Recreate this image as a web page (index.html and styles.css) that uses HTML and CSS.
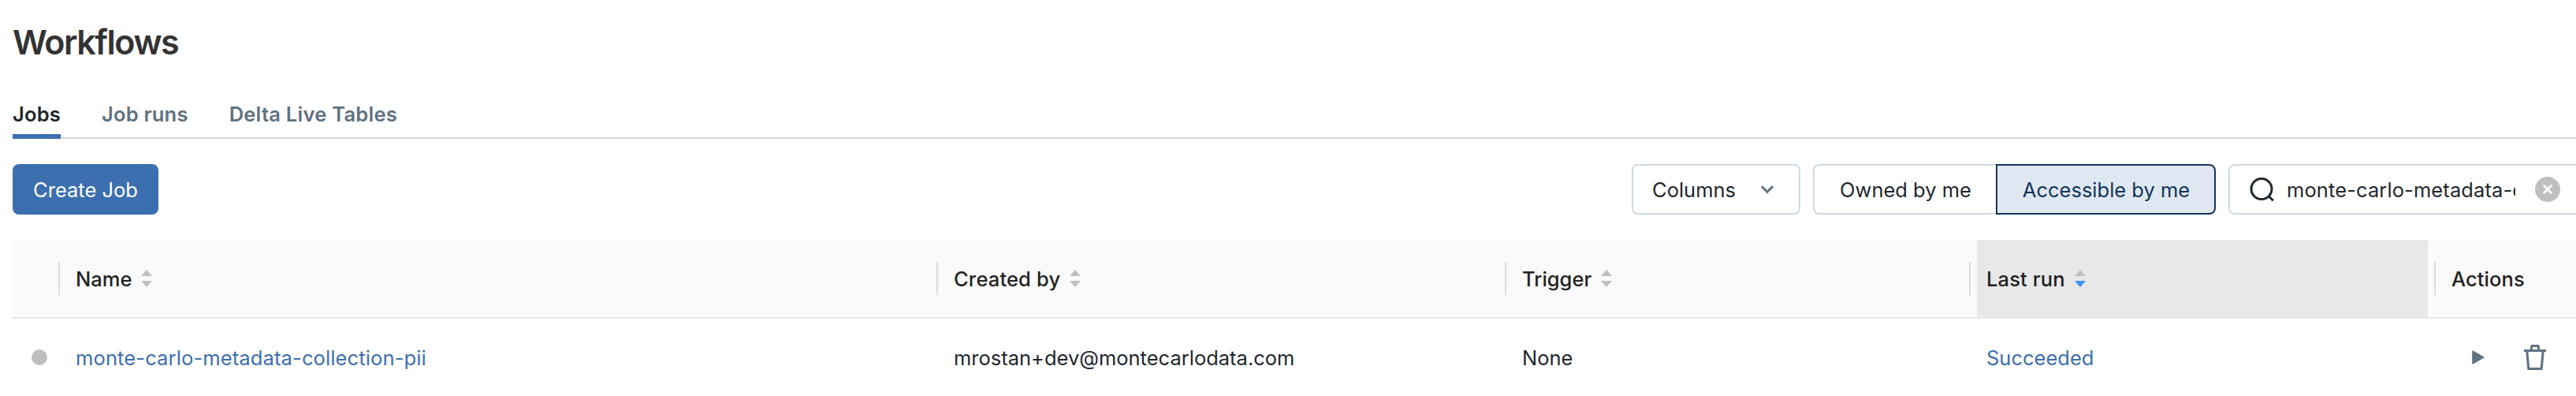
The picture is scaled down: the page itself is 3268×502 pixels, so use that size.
FILE: index.html
```html
<!DOCTYPE html>
<html lang="en">
<head>
<meta charset="utf-8">
<title>Workflows</title>
<link rel="stylesheet" href="styles.css">
</head>
<body>
<main class="page">
  <h1 class="title">Workflows</h1>
  <nav class="tabs">
    <a class="tab tab-active">Jobs</a>
    <a class="tab tab-runs">Job runs</a>
    <a class="tab tab-delta">Delta Live Tables</a>
  </nav>
  <div class="toolbar">
    <button class="btn create">Create Job</button>
    <div class="filters">
      <button class="btn columns">Columns
        <svg class="chevron" width="16" height="11" viewBox="0 0 16 11"><path d="M1.8 2l6.2 6.4L14.2 2"/></svg>
      </button>
      <div class="segment">
        <button class="btn owned">Owned by me</button>
        <button class="btn accessible">Accessible by me</button>
      </div>
      <div class="search">
        <svg class="lens" width="32" height="32" viewBox="0 0 32 32"><circle cx="15" cy="15.5" r="13"/><path d="M24.2 24.7l5.6 5.6"/></svg>
        <div class="query">monte-carlo-metadata-collection-pii</div>
        <svg class="clear" width="32" height="32" viewBox="0 0 32 32"><circle cx="16" cy="16" r="16"/><path d="M10.8 10.8l10.4 10.4M21.2 10.8l-10.4 10.4"/></svg>
      </div>
    </div>
  </div>
  <div class="table">
    <div class="row head">
      <div class="cell divided"></div>
      <div class="cell divided">Name<svg class="sort" width="14" height="22" viewBox="0 0 14 22"><path d="M7 0l7 8H0z"/><path d="M0 14h14l-7 8z"/></svg></div>
      <div class="cell divided"><span class="creator-label">Created by</span><svg class="sort" width="14" height="22" viewBox="0 0 14 22"><path d="M7 0l7 8H0z"/><path d="M0 14h14l-7 8z"/></svg></div>
      <div class="cell divided before-sorted">Trigger<svg class="sort" width="14" height="22" viewBox="0 0 14 22"><path d="M7 0l7 8H0z"/><path d="M0 14h14l-7 8z"/></svg></div>
      <div class="cell sorted"><span class="run-label">Last run</span><svg class="sort" width="14" height="22" viewBox="0 0 14 22"><path d="M7 0l7 8H0z"/><path class="on" d="M0 14h14l-7 8z"/></svg></div>
      <div class="cell actions-head">Actions</div>
    </div>
    <div class="row body">
      <div class="cell status"><i class="dot"></i></div>
      <div class="cell"><a class="link job">monte-carlo-metadata-collection-pii</a></div>
      <div class="cell">mrostan+dev@montecarlodata.com</div>
      <div class="cell">None</div>
      <div class="cell result"><a class="link">Succeeded</a></div>
      <div class="cell actions">
        <svg class="play" width="16" height="18" viewBox="0 0 16 18"><path d="M1 1.2v15.6L14.6 9z"/></svg>
        <svg class="trash" width="28" height="32" viewBox="0 0 28 32"><path d="M0 7.5h28M3.8 8l2 22.5h16.4l2-22.5M8.7 7.5l1.4-6h7.8l1.4 6"/></svg>
      </div>
    </div>
  </div>
</main>
</body>
</html>
```
FILE: styles.css
```css
* { box-sizing: border-box; }
body { margin: 0; background: #fff; color: #1f272d; font-family: Inter, sans-serif; font-size: 25.5px; overflow: hidden; }
.page { width: 3268px; height: 502px; padding-left: 16px; overflow: hidden; }
.title { margin: 0; padding-top: 26px; height: 120px; font-size: 43px; font-weight: 600; line-height: 54px; letter-spacing: -1.45px; color: #333; }
.tabs { display: flex; gap: 52px; height: 56px; border-bottom: 2px solid #cdd9e4; font-weight: 600; color: #5f7281; line-height: 50px; }
.tab { height: 56px; letter-spacing: 0.2px; }
.tab-active { color: #1f272d; border-bottom: 6px solid #3b6fb0; }
.tab-delta { letter-spacing: 0.25px; }
.toolbar { display: flex; justify-content: space-between; margin-top: 32px; height: 64px; }
.btn { height: 64px; font: inherit; color: inherit; background: #fff; border: 2px solid #cdd9e4; border-radius: 8px; padding: 0; white-space: nowrap; }
.create { width: 185px; background: #3b6fb0; border-color: #3b6fb0; color: #fff; }
.filters { display: flex; gap: 16px; width: 1198px; }
.columns { width: 214px; flex: none; display: flex; align-items: center; justify-content: space-between; padding: 0 32px 0 24px; }
.chevron { fill: none; stroke: #5f7281; stroke-width: 3; stroke-linecap: round; }
.segment { display: flex; flex: none; }
.owned { width: 232px; border-right: 0; border-radius: 8px 0 0 8px; padding-left: 1px; }
.accessible { width: 279px; border-color: #11345b; color: #11345b; background: #dfe8f2; border-radius: 0 8px 8px 0; padding-left: 1px; }
.search { flex: none; width: 460px; height: 64px; border: 2px solid #cdd9e4; border-radius: 8px; display: flex; align-items: center; padding-left: 25px; }
.query { width: 290px; overflow: hidden; white-space: nowrap; margin: 0 25px 0 15px; letter-spacing: 0.1px; }
.lens { fill: none; stroke: #1f272d; stroke-width: 3; flex: none; }
.clear { fill: #bfbfbf; stroke: none; flex: none; }
.clear path { stroke: #fff; stroke-width: 2.8; }
.table { margin-top: 32px; }
.row { display: grid; grid-template-columns: 60px 1114px 721px 597px 572px 188px; }
.cell { display: flex; align-items: center; padding-left: 20px; }
.head { height: 100px; background: #fafafa; border-bottom: 2px solid #e8e8e8; font-weight: 500; color: #222; }
.divided::after, .actions-head::before { content: ""; width: 2px; height: 42px; background: #dcdcdc; }
.divided::after { margin-left: auto; }
.before-sorted { padding-right: 8px; }
.actions-head { padding-left: 8px; letter-spacing: 0.1px; }
.actions-head::before { margin-right: 20px; }
.sorted, .result { padding-left: 12px; }
.sorted { background: #e8e8e8; margin-bottom: -2px; padding-bottom: 2px; }
.creator-label, .run-label { letter-spacing: 0.15px; }
.sort { margin-left: 12px; fill: #bfbfbf; }
.sort .on { fill: #4192f7; }
.body { height: 98px; }
.link { color: #3b6fb0; }
.job { letter-spacing: 0.13px; }
.status { padding-left: 24px; }
.dot { width: 20px; height: 20px; border-radius: 50%; background: #bfbfbf; }
.actions { padding-left: 56px; gap: 50px; }
.play { fill: #5f7281; stroke: #5f7281; stroke-width: 1.6; stroke-linejoin: round; }
.trash { fill: none; stroke: #5f7281; stroke-width: 3; }
```
